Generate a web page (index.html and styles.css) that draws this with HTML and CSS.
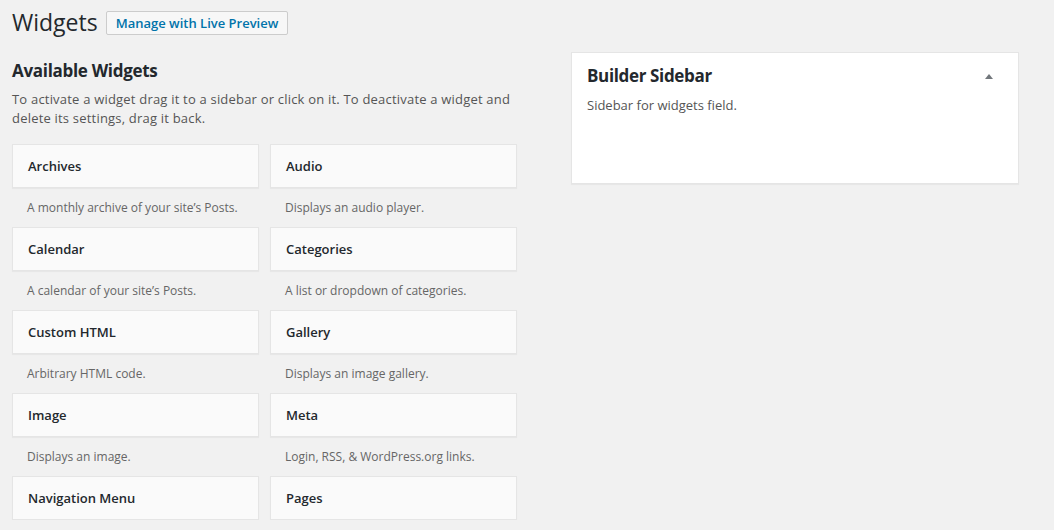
FILE: index.html
```html
<!DOCTYPE html>
<html lang="en">
<head>
<meta charset="utf-8">
<title>Widgets</title>
<link rel="stylesheet" href="styles.css">
</head>
<body>
<div class="wrap">
  <header class="head">
    <h1 class="title">Widgets</h1>
    <a class="btn" href="#">Manage with Live Preview</a>
  </header>
  <div class="cols">
    <section class="left">
      <h2 class="section-title">Available Widgets</h2>
      <p class="intro">To activate a widget drag it to a sidebar or click on it. To deactivate a widget and delete its settings, drag it back.</p>
      <div class="grid">
        <div class="widget"><div class="w-top">Archives</div><div class="w-desc">A monthly archive of your site’s Posts.</div></div>
        <div class="widget"><div class="w-top">Audio</div><div class="w-desc">Displays an audio player.</div></div>
        <div class="widget"><div class="w-top">Calendar</div><div class="w-desc">A calendar of your site’s Posts.</div></div>
        <div class="widget"><div class="w-top">Categories</div><div class="w-desc">A list or dropdown of categories.</div></div>
        <div class="widget"><div class="w-top">Custom HTML</div><div class="w-desc">Arbitrary HTML code.</div></div>
        <div class="widget"><div class="w-top">Gallery</div><div class="w-desc">Displays an image gallery.</div></div>
        <div class="widget"><div class="w-top">Image</div><div class="w-desc">Displays an image.</div></div>
        <div class="widget"><div class="w-top">Meta</div><div class="w-desc">Login, RSS, &amp; WordPress.org links.</div></div>
        <div class="widget"><div class="w-top">Navigation Menu</div></div>
        <div class="widget"><div class="w-top">Pages</div></div>
      </div>
    </section>
    <section class="right">
      <div class="panel">
        <div class="panel-head">
          <h2 class="panel-title">Builder Sidebar</h2>
          <span class="toggle" aria-hidden="true"></span>
        </div>
        <p class="panel-desc">Sidebar for widgets field.</p>
      </div>
    </section>
  </div>
</div>
</body>
</html>
```

FILE: styles.css
```css
html, body {
  margin: 0;
  padding: 0;
}
body {
  background: #f1f1f1;
  font-family: "Open Sans", "Noto Sans", sans-serif;
  font-size: 13px;
  color: #23282d;
}
.wrap {
  padding: 8px 0 0 12px;
}
.head {
  display: flex;
  align-items: center;
  gap: 8px;
  height: 29px;
}
.title {
  margin: 0;
  font-size: 23px;
  font-weight: 400;
  line-height: 29px;
  color: #23282d;
}
.btn {
  display: inline-block;
  padding: 4px 9px;
  line-height: 14px;
  font-size: 13px;
  font-weight: 600;
  color: #0073aa;
  text-decoration: none;
  background: #f7f7f7;
  border: 1px solid #ccc;
  border-radius: 2px;
}
.cols {
  display: flex;
  align-items: flex-start;
  gap: 43px;
}
.left {
  width: 516px;
  flex: none;
}
.section-title {
  margin: 23px 0 0;
  font-size: 17px;
  font-weight: 700;
  line-height: 22px;
  letter-spacing: -0.3px;
  color: #23282d;
}
.intro {
  margin: 8px 0 0;
  line-height: 19px;
  letter-spacing: 0.2px;
  color: #555;
}
.grid {
  margin-top: 16px;
  display: grid;
  grid-template-columns: 247px 247px;
  column-gap: 11px;
}
.w-top {
  height: 42px;
  display: flex;
  align-items: center;
  padding: 0 15px;
  background: #fafafa;
  border: 1px solid #e5e5e5;
  box-shadow: 0 1px 1px rgba(0, 0, 0, 0.04);
  font-weight: 600;
  color: #23282d;
}
.w-desc {
  padding: 10px 15px 10px 15px;
  line-height: 19px;
  font-size: 12px;
  white-space: nowrap;
  color: #666;
}
.right {
  width: 448px;
  flex: none;
}
.panel {
  margin-top: 15px;
  box-sizing: border-box;
  height: 132px;
  background: #fff;
  border: 1px solid #e5e5e5;
  box-shadow: 0 1px 1px rgba(0, 0, 0, 0.04);
  padding: 12px 15px 0;
}
.panel-head {
  display: flex;
  align-items: center;
  justify-content: space-between;
}
.panel-title {
  margin: 0;
  font-size: 17px;
  font-weight: 700;
  line-height: 22px;
  letter-spacing: -0.35px;
  color: #23282d;
}
.toggle {
  width: 0;
  height: 0;
  border-left: 4px solid transparent;
  border-right: 4px solid transparent;
  border-bottom: 5px solid #72777c;
  margin-right: 10px;
}
.panel-desc {
  margin: 9px 0 0;
  line-height: 19px;
  color: #555;
}
```
